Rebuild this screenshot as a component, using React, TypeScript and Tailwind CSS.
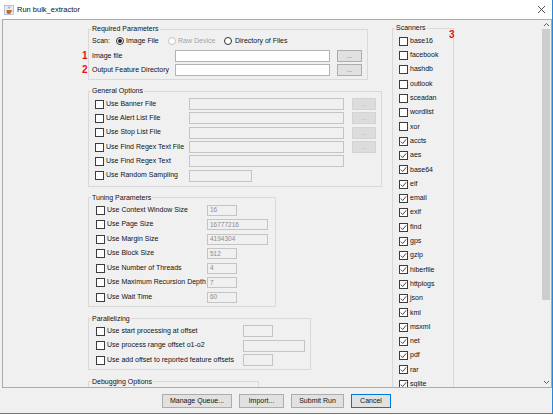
import React from "react";

const scanners: [string, boolean][] = [
  ["base16", false],
  ["facebook", false],
  ["hashdb", false],
  ["outlook", false],
  ["sceadan", false],
  ["wordlist", false],
  ["xor", false],
  ["accts", true],
  ["aes", true],
  ["base64", true],
  ["elf", true],
  ["email", true],
  ["exif", true],
  ["find", true],
  ["gps", true],
  ["gzip", true],
  ["hiberfile", true],
  ["httplogs", true],
  ["json", true],
  ["kml", true],
  ["msxml", true],
  ["net", true],
  ["pdf", true],
  ["rar", true],
  ["sqlite", true],
];

const general = [
  { label: "Use Banner File", wide: true, btn: true },
  { label: "Use Alert List File", wide: true, btn: true },
  { label: "Use Stop List File", wide: true, btn: true },
  { label: "Use Find Regex Text File", wide: true, btn: true },
  { label: "Use Find Regex Text", wide: true, btn: false },
  { label: "Use Random Sampling", wide: false, btn: false },
];

const tuning = [
  { label: "Use Context Window Size", value: "16", long: false },
  { label: "Use Page Size", value: "16777216", long: true },
  { label: "Use Margin Size", value: "4194304", long: true },
  { label: "Use Block Size", value: "512", long: false },
  { label: "Use Number of Threads", value: "4", long: false },
  { label: "Use Maximum Recursion Depth", value: "7", long: false },
  { label: "Use Wait Time", value: "60", long: false },
];

const parallel = [
  { label: "Use start processing at offset", long: false },
  { label: "Use process range offset o1-o2", long: true },
  { label: "Use add offset to reported feature offsets", long: false },
];

function Check({ on }: { on?: boolean }) {
  return (
    <span className="w-[9px] h-[9px] shrink-0 border border-[#3c3c3c] bg-white flex items-center justify-center">
      {on && (
        <svg width="7" height="7" viewBox="0 0 7 7">
          <path d="M0.8 3.6 L2.7 5.5 L6.2 1.3" fill="none" stroke="#333" strokeWidth="0.9" />
        </svg>
      )}
    </span>
  );
}

function Radio({ on, disabled }: { on?: boolean; disabled?: boolean }) {
  return (
    <span
      className={
        disabled
          ? "w-[8px] h-[8px] shrink-0 rounded-full border border-[#c4c4c4] bg-white"
          : "w-[8px] h-[8px] shrink-0 rounded-full border border-[#333] bg-white flex items-center justify-center"
      }
    >
      {on && <span className="w-[4px] h-[4px] rounded-full bg-[#222]" />}
    </span>
  );
}

function Legend({ children }: { children: React.ReactNode }) {
  return <legend className="ml-[2px] px-[1px] leading-[10px] text-[#111]">{children}</legend>;
}

export default function App() {
  return (
    <div className="w-[553px] h-[414px] flex flex-col bg-[#f0f0f0] border-r border-b border-[#2b87d3] overflow-hidden font-['Liberation_Sans',Arial,sans-serif] text-[7px] text-[#111]">
      {/* title bar */}
      <div className="h-[19px] bg-white flex items-center shrink-0">
        <svg width="10" height="10" viewBox="0 0 10 10" className="ml-[4px]">
          <rect x="0.5" y="0.5" width="9" height="9" fill="#e8eef6" stroke="#8aa2c0" strokeWidth="0.6" />
          <path d="M2.5 5 h4.5 v2 a2 2 0 0 1 -2 2 h-0.5 a2 2 0 0 1 -2 -2 z" fill="#c26b1e" />
          <path d="M7 5.5 h1 v1.2 h-1" fill="none" stroke="#c26b1e" strokeWidth="0.6" />
          <path d="M4 1.5 q1 1 0 2 M5.5 1.5 q1 1 0 2" fill="none" stroke="#d63b2b" strokeWidth="0.6" />
        </svg>
        <span className="ml-[3px] text-[7.5px] text-[#111]">Run bulk_extractor</span>
        <svg width="9" height="9" viewBox="0 0 9 9" className="ml-auto mr-[6px]">
          <path d="M1 1 L8 8 M8 1 L1 8" stroke="#222" strokeWidth="0.8" />
        </svg>
      </div>

      {/* scroll pane */}
      <div className="ml-[2px] h-[369px] shrink-0 flex border border-[#ababab]">
        <div className="flex-1 relative overflow-hidden flex items-start pl-[85px] gap-[10px]">
          {/* left column */}
          <div className="w-[294px] flex flex-col">
            <fieldset className="mt-[4px] w-[280px] border border-[#d9d9d9] pb-[1.5px]">
              <Legend>Required Parameters</Legend>
              <div className="h-[14.5px] flex items-center pl-[3px]">
                <span className="w-[24px]">Scan:</span>
                <span className="w-[52px] flex items-center gap-[2px]">
                  <Radio on />
                  Image File
                </span>
                <span className="w-[56px] flex items-center gap-[2px] text-[#a3a3a3]">
                  <Radio disabled />
                  Raw Device
                </span>
                <span className="flex items-center gap-[3px]">
                  <Radio />
                  Directory of Files
                </span>
              </div>
              {["Image file", "Output Feature Directory"].map((l) => (
                <div key={l} className="h-[14.5px] flex items-center pl-[3px]">
                  <span className="w-[83px]">{l}</span>
                  <div className="w-[155px] h-[12px] bg-white border border-[#b3b3b3]" />
                  <div className="ml-[7px] w-[25px] h-[12px] bg-[#e1e1e1] border border-[#adadad] flex items-center justify-center text-[6px] leading-none text-[#333]">
                    ...
                  </div>
                </div>
              ))}
            </fieldset>

            <fieldset className="mt-[6px] w-[294px] border border-[#d9d9d9] pt-[1px] pb-[3px]">
              <Legend>General Options</Legend>
              {general.map((g) => (
                <div key={g.label} className="h-[14.3px] flex items-center pl-[6px]">
                  <span className="w-[94px] flex items-center gap-[2px]">
                    <Check />
                    {g.label}
                  </span>
                  <div
                    className={
                      g.wide
                        ? "w-[155px] h-[12px] bg-[#f0f0f0] border border-[#c4c4c4]"
                        : "w-[63px] h-[12px] bg-[#f0f0f0] border border-[#c4c4c4]"
                    }
                  />
                  {g.btn && (
                    <div className="ml-[8px] w-[24px] h-[12px] bg-[#dcdcdc] border border-[#d4d4d4] flex items-center justify-center text-[6px] leading-none text-[#a8a8a8]">
                      ...
                    </div>
                  )}
                </div>
              ))}
            </fieldset>

            <fieldset className="mt-[6px] w-[188px] border border-[#d9d9d9] pb-[1.5px]">
              <Legend>Tuning Parameters</Legend>
              {tuning.map((t) => (
                <div key={t.label} className="h-[14.5px] flex items-center pl-[7px]">
                  <span className="w-[111px] flex items-center gap-[2px]">
                    <Check />
                    {t.label}
                  </span>
                  <div
                    className={
                      t.long
                        ? "w-[61px] h-[11px] bg-[#f0f0f0] border border-[#c4c4c4] pl-[2px] flex items-center text-[6.5px] text-[#8c8c8c]"
                        : "w-[30px] h-[11px] bg-[#f0f0f0] border border-[#c4c4c4] pl-[2px] flex items-center text-[6.5px] text-[#8c8c8c]"
                    }
                  >
                    {t.value}
                  </div>
                </div>
              ))}
            </fieldset>

            <fieldset className="mt-[7px] w-[223px] border border-[#d9d9d9] pb-[1.5px]">
              <Legend>Parallelizing</Legend>
              {parallel.map((p) => (
                <div key={p.label} className="h-[14.5px] flex items-center pl-[7px]">
                  <span className="w-[147px] flex items-center gap-[2px]">
                    <Check />
                    {p.label}
                  </span>
                  <div
                    className={
                      p.long
                        ? "w-[62px] h-[12px] bg-[#f0f0f0] border border-[#c4c4c4]"
                        : "w-[30px] h-[12px] bg-[#f0f0f0] border border-[#c4c4c4]"
                    }
                  />
                </div>
              ))}
            </fieldset>

            <fieldset className="mt-[7px] w-[171px] h-[40px] border border-[#d9d9d9]">
              <Legend>Debugging Options</Legend>
            </fieldset>
          </div>

          {/* scanners */}
          <fieldset className="mt-[3px] w-[62px] border border-[#d9d9d9] pt-[1px] pb-[12px]">
            <Legend>Scanners</Legend>
            {scanners.map(([name, on]) => (
              <div key={name} className="h-[14.3px] flex items-center gap-[2px] pl-[6px]">
                <Check on={on} />
                {name}
              </div>
            ))}
          </fieldset>

          {/* annotations */}
          <span className="absolute left-[79px] top-[31px] text-[10px] leading-[10px] font-bold text-[#e8101a]">1</span>
          <span className="absolute left-[79px] top-[45px] text-[10px] leading-[10px] font-bold text-[#e8101a]">2</span>
          <span className="absolute left-[446px] top-[10px] text-[10px] leading-[10px] font-bold text-[#e8101a]">3</span>
        </div>

        {/* scrollbar */}
        <div className="w-[10px] flex flex-col bg-[#f0f0f0]">
          <div className="h-[9px] flex items-center justify-center">
            <svg width="7" height="5" viewBox="0 0 7 5">
              <path d="M1 4 L3.5 1.5 L6 4" fill="none" stroke="#606060" strokeWidth="1" />
            </svg>
          </div>
          <div className="h-[271px] mx-[1px] bg-[#cdcdcd]" />
          <div className="flex-1" />
          <div className="h-[9px] flex items-center justify-center">
            <svg width="7" height="5" viewBox="0 0 7 5">
              <path d="M1 1 L3.5 3.5 L6 1" fill="none" stroke="#606060" strokeWidth="1" />
            </svg>
          </div>
        </div>
      </div>

      {/* button bar */}
      <div className="flex-1 flex items-center justify-center gap-[7px] pl-[1px]">
        <button className="w-[70px] h-[14px] bg-[#e1e1e1] border border-[#adadad] leading-none">Manage Queue...</button>
        <button className="w-[45px] h-[14px] bg-[#e1e1e1] border border-[#adadad] leading-none">Import...</button>
        <button className="w-[53px] h-[14px] bg-[#e1e1e1] border border-[#adadad] leading-none">Submit Run</button>
        <button className="w-[40px] h-[14px] bg-[#e1e1e1] border border-[#0078d7] leading-none">Cancel</button>
      </div>
    </div>
  );
}
